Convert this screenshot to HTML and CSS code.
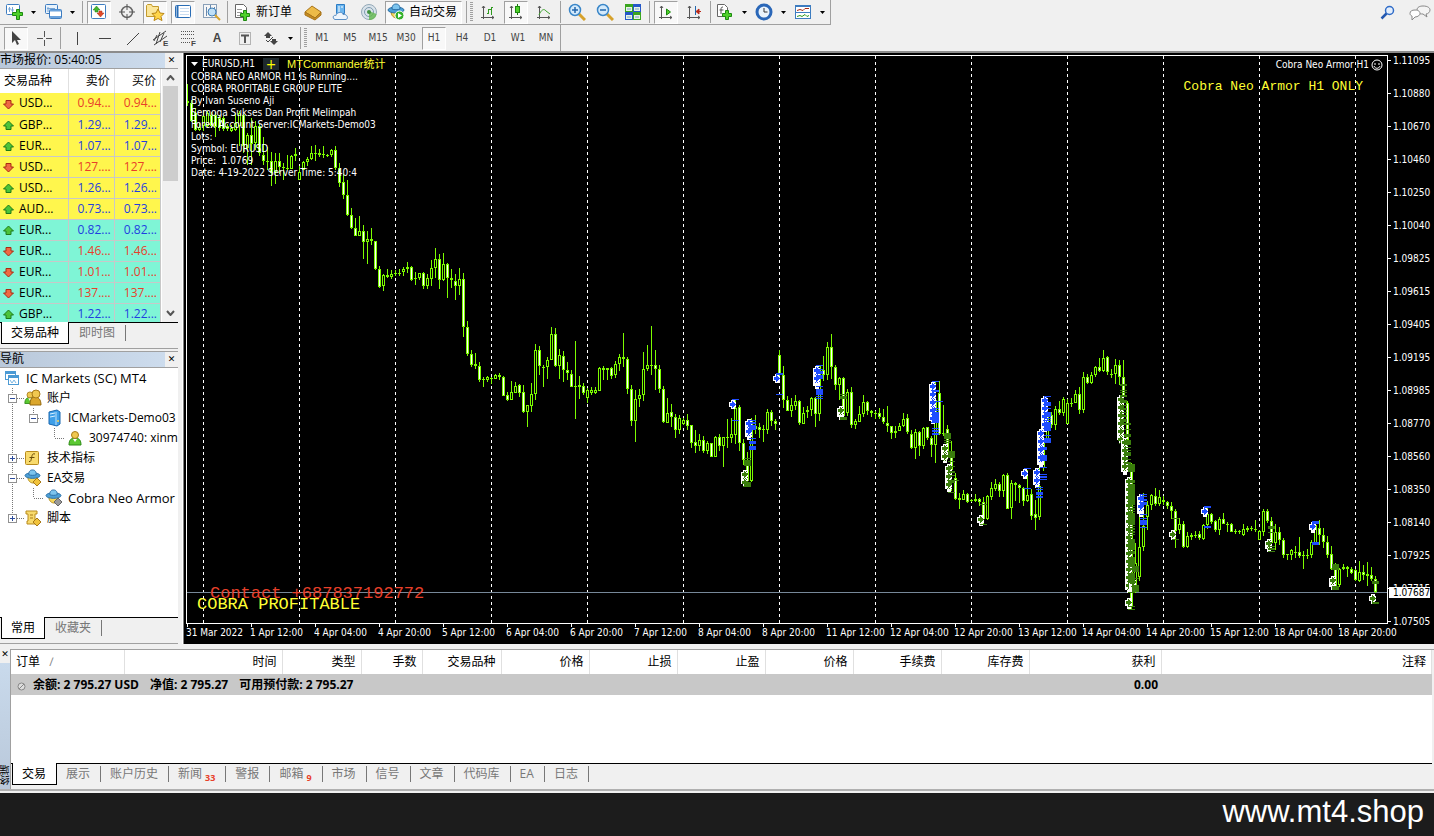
FILE: index.html
```html
<!DOCTYPE html>
<html lang="zh-CN">
<head>
    <meta charset="UTF-8">
    <meta name="viewport" content="width=device-width, initial-scale=1.0">
    <title>EURUSD,H1</title>
    <link rel="stylesheet" href="styles.css">
</head>
<body>

    <!-- Shared symbols -->
    <svg class="defs" width="0" height="0" aria-hidden="true">
        <symbol id="caret" viewBox="0 0 5 3"><path d="M0 0h5L2.500 3z" fill="#000"/></symbol>
        <symbol id="axes" viewBox="0 0 16 16"><path d="M3.500 15V2M1 13.500h13M2 4l1.500-2L5 4M12 12l2 1.500-2 1.500" fill="none" stroke="#555"/></symbol>
        <symbol id="up" viewBox="0 0 11 11"><path d="M5.500 1l5 5H8v3.500H3V6H.5z" fill="#4cc33a" stroke="#1e7a18"/></symbol>
        <symbol id="down" viewBox="0 0 11 11"><path d="M5.500 10l5-5H8V1.500H3V5H.5z" fill="#ef6a43" stroke="#a82a14"/></symbol>
        <symbol id="hat" viewBox="0 0 18 16">
            <path d="M4 8c0 5 3 7 6 7s4-3 4-7z" fill="#f6d65a" stroke="#b08a20"/>
            <ellipse cx="9" cy="7" rx="8" ry="3" fill="#4c9fd6" stroke="#2a6ea5"/>
            <path d="M5 6c0-4 2-5 4-5s4 1 4 5c-2 1-6 1-8 0z" fill="#7cc4ee" stroke="#2a6ea5"/>
        </symbol>
        <symbol id="man" viewBox="0 0 14 16">
            <path d="M1 15c0-5 2-7 6-7s6 2 6 7z" fill="#5bc832" stroke="#2c8a14"/>
            <path d="M5 9l2 3 2-3z" fill="#fff"/>
            <circle cx="7" cy="5" r="3.500" fill="#f0c850" stroke="#a87a18"/>
        </symbol>
        <!-- Tree branches -->
        <symbol id="pass" viewBox="0 0 24 20"><path d="M12.500 0v20" stroke="#777" stroke-dasharray="1 1"/></symbol>
        <symbol id="minus1" viewBox="0 0 24 20"><path d="M12.500 0v20M17 10.500h7" stroke="#777" stroke-dasharray="1 1"/><rect x="8.500" y="6.500" width="8" height="8" fill="#fff" stroke="#919191"/><path d="M10 10.500h5" stroke="#2b4b9b"/></symbol>
        <symbol id="plus1" viewBox="0 0 24 20"><path d="M12.500 0v20M17 10.500h7" stroke="#777" stroke-dasharray="1 1"/><rect x="8.500" y="6.500" width="8" height="8" fill="#fff" stroke="#919191"/><path d="M10 10.500h5M12.500 8v5" stroke="#2b4b9b"/></symbol>
        <symbol id="last1" viewBox="0 0 24 20"><path d="M12.500 0v10M17 10.500h7" stroke="#777" stroke-dasharray="1 1"/><rect x="8.500" y="6.500" width="8" height="8" fill="#fff" stroke="#919191"/><path d="M10 10.500h5M12.500 8v5" stroke="#2b4b9b"/></symbol>
        <symbol id="minus2" viewBox="0 0 21 20"><path d="M9.500 0v10M14 10.500h6" stroke="#777" stroke-dasharray="1 1"/><rect x="5.500" y="6.500" width="8" height="8" fill="#fff" stroke="#919191"/><path d="M7 10.500h5" stroke="#2b4b9b"/></symbol>
        <symbol id="elbow" viewBox="0 0 21 20"><path d="M9.500 0v10M10 10.500h10" stroke="#777" stroke-dasharray="1 1"/></symbol>
    </svg>

    <!-- Standard toolbar -->
    <header class="toolbars">
        <div class="bar-row">
            <div class="toolbar">
                <button class="tool drop" aria-label="新图表"><svg width="19" height="18"><rect x="1.500" y="1.500" width="13" height="10" rx="1" fill="#fff" stroke="#3d7cc0"/><path d="M4.500 4v5M7.500 4v5M3 6h3M6 7h3" stroke="#79a6d6"/><path d="M11.500 6.500h3v3h3v3h-3v4h-3v-4h-4v-3h4z" fill="#4fd02a" stroke="#1c8a10"/></svg><svg class="caret" width="5" height="3"><use href="#caret"/></svg></button>
                <button class="tool drop" aria-label="配置文件"><svg width="19" height="18"><rect x="1.500" y="1.500" width="12" height="9" rx="1" fill="#e9f3fc" stroke="#3d7cc0"/><rect x="5.500" y="6.500" width="12" height="9" rx="1" fill="#fff" stroke="#3d7cc0"/><path d="M6 7.500h11M6 14h11" stroke="#6aa2dc" stroke-width="2"/><path d="M4 4v5M3 5.500h8" stroke="#79a6d6"/></svg><svg class="caret" width="5" height="3"><use href="#caret"/></svg></button>
                <span class="sep"></span>
                <button class="tool on" aria-label="市场报价"><svg width="18" height="18"><rect x="1.500" y="1.500" width="14" height="14" rx="1" fill="#fff" stroke="#3d7cc0"/><path d="M6.500 3l3.500 4H8v2H5V7H3z" fill="#44b62d" stroke="#1e7a18" stroke-width=".5"/><path d="M10.500 14l3.500-4h-2V8H9v2H7z" fill="#e04a2a" stroke="#a82a14" stroke-width=".5"/></svg></button>
                <button class="tool" aria-label="数据窗口"><svg width="18" height="18"><circle cx="9" cy="9" r="5.500" fill="none" stroke="#666" stroke-width="1.500"/><path d="M9 1v6M9 11v6M1 9h6M11 9h6" stroke="#555"/></svg></button>
                <button class="tool on" aria-label="导航"><svg width="20" height="18"><path d="M1.500 13.500v-11l1-1h4l1 2h6v10z" fill="#fbe69a" stroke="#c39a2c"/><path d="M13 6l2 4 4 .5-3 3 1 4-4-2-4 2 1-4-3-3 4-.5z" fill="#ffd54a" stroke="#b98512"/></svg></button>
                <button class="tool on" aria-label="终端"><svg width="18" height="18"><rect x="1.500" y="2.500" width="15" height="12" rx="1" fill="#fff" stroke="#2a6db5"/><path d="M3.500 3v11" stroke="#2a6db5" stroke-width="2"/><path d="M6 5.500h9M6 8.500h9M6 11.500h9" stroke="#c9dcf0"/></svg></button>
                <button class="tool" aria-label="策略测试"><svg width="19" height="18"><rect x="1.500" y="1.500" width="13" height="13" fill="#f7f7f7" stroke="#8aa0b8"/><path d="M4.500 4v9M8.500 2v9M12.500 4v9" stroke="#6a89ad"/><circle cx="10" cy="9" r="4" fill="#bfe0f7" stroke="#3f7fb8"/><path d="M13 12l5 5" stroke="#d9a52c" stroke-width="2"/></svg></button>
                <span class="sep"></span>
                <button class="tool wide" aria-label="新订单"><svg width="18" height="18"><path d="M1.500 1.500h8l3 3v10h-11z" fill="#fff" stroke="#666"/><path d="M3 6.500h5M3 9.500h5M3 12.500h4" stroke="#999"/><path d="M9.500 7.500h3v3h3v3h-3v4h-3v-4h-3v-3h3z" fill="#4fd02a" stroke="#1c8a10"/></svg>新订单</button>
                <button class="tool" aria-label="MetaEditor"><svg width="18" height="18"><path d="M1 9l7-6 9 6-6 6z" fill="#edbb48" stroke="#a8741a"/><path d="M1 9v3l10 5 6-5V9l-6 6z" fill="#c68c22" stroke="#a8741a"/></svg></button>
                <button class="tool" aria-label="MQL5"><svg width="18" height="18"><path d="M4.500 1.500h8v9h-8z" fill="#6bb5ee" stroke="#2d7cc4"/><path d="M7 3v6M9 4h2" stroke="#fff"/><path d="M3 16.500c-3-1-2-5 1-4 1-4 7-4 7-1 4-1 6 4 3 5z" fill="#eef5fc" stroke="#5b8fc5"/></svg></button>
                <button class="tool" aria-label="信号"><svg width="18" height="18"><circle cx="9" cy="9" r="7.500" fill="#d9e3ea" stroke="#93a8b7"/><circle cx="9" cy="9" r="4.500" fill="none" stroke="#7f9bb0"/><path d="M9 8v9c4 0 7-2 7.500-6" fill="#62b84c" opacity=".8"/><circle cx="9" cy="9" r="2" fill="#3f9140"/></svg></button>
                <button class="tool wide on" aria-label="自动交易"><svg width="18" height="18"><use href="#hat" width="18" height="16"/><circle cx="12.500" cy="12.500" r="4.500" fill="#34b02a" stroke="#fff"/><path d="M11 10v5l4-2.500z" fill="#fff"/></svg>自动交易</button>
                <span class="sep"></span>
                <span class="grip"></span>
                <button class="tool" aria-label="柱状图"><svg width="16" height="16"><use href="#axes"/><path d="M8.500 10V5M11.500 11V3M7 9.500h2M9 5.500h2M11 3.500h2" stroke="#2f9a1f"/></svg></button>
                <button class="tool on" aria-label="阴阳烛"><svg width="16" height="16"><use href="#axes"/><path d="M9.500 0v11" stroke="#1c7a10"/><rect x="7.500" y="2.500" width="4" height="6" fill="#4fd02a" stroke="#1c8a10"/></svg></button>
                <button class="tool" aria-label="折线图"><svg width="16" height="16"><use href="#axes"/><path d="M3 11c2-5 5-7 7-4l4 3" fill="none" stroke="#3fa32f"/></svg></button>
                <span class="sep"></span>
                <button class="tool" aria-label="放大"><svg width="18" height="18"><path d="M11 11l6 6" stroke="#d6a12b" stroke-width="3"/><circle cx="7" cy="7" r="5.500" fill="#d4eafb" stroke="#3a86c8" stroke-width="1.500"/><path d="M4 7h6M7 4v6" stroke="#2367ad" stroke-width="1.500"/></svg></button>
                <button class="tool" aria-label="缩小"><svg width="18" height="18"><path d="M11 11l6 6" stroke="#d6a12b" stroke-width="3"/><circle cx="7" cy="7" r="5.500" fill="#d4eafb" stroke="#3a86c8" stroke-width="1.500"/><path d="M4 7h6" stroke="#2367ad" stroke-width="1.500"/></svg></button>
                <button class="tool" aria-label="平铺窗口"><svg width="18" height="18"><path d="M1 1h8v8H1zM9 9h8v8H9z" fill="#3aa51f"/><path d="M9 1h8v8H9zM1 9h8v8H1z" fill="#2558c8"/><path d="M2 4h6v4H2zM10 4h6v4h-6zM2 12h6v4H2zM10 12h6v4h-6z" fill="#e9f4e4"/><path d="M3 6h4M11 6h4M3 14h4M11 14h4" stroke="#78a0c8"/></svg></button>
                <span class="sep"></span>
                <button class="tool on" aria-label="自动滚动"><svg width="16" height="16"><use href="#axes"/><path d="M8.500 5v6l4-3z" fill="#4fd02a" stroke="#1c8a10"/></svg></button>
                <button class="tool" aria-label="图表平移"><svg width="16" height="16"><use href="#axes"/><path d="M9.500 2v9" stroke="#2367ad"/><path d="M15 7.500h-3M13 5l-3 2.500 3 2.500z" fill="#b92a1a" stroke="#b92a1a"/></svg></button>
                <span class="sep"></span>
                <button class="tool drop" aria-label="指标"><svg width="18" height="18"><path d="M1.500 1.500h7l3 3v9h-10z" fill="#fff" stroke="#666"/><path d="M7 4c-2 0-2 1-2 3v4M3.500 7h4" stroke="#555" fill="none"/><path d="M9.500 7.500h3v3h3v3h-3v3h-3v-3h-3v-3h3z" fill="#4fd02a" stroke="#1c8a10"/></svg><svg class="caret" width="5" height="3"><use href="#caret"/></svg></button>
                <button class="tool drop" aria-label="周期"><svg width="18" height="18"><circle cx="9" cy="9" r="7" fill="#eaf3fc" stroke="#2a67b8" stroke-width="3"/><path d="M9 5v4h3.500" stroke="#333" fill="none"/></svg><svg class="caret" width="5" height="3"><use href="#caret"/></svg></button>
                <button class="tool drop" aria-label="模板"><svg width="18" height="18"><rect x="1.500" y="2.500" width="15" height="13" fill="#fff" stroke="#3d7cc0"/><path d="M2 3.500h14M2 9.500h14" stroke="#3d7cc0"/><path d="M3 7.500l3-1 3 1 2-2h4" stroke="#a82a14" fill="none"/><path d="M3 13.500l3-1 2 1 3-2 2 2 2-1" stroke="#2f9a1f" fill="none"/></svg><svg class="caret" width="5" height="3"><use href="#caret"/></svg></button>
            </div>
            <div class="right-tools">
                <button class="tool" aria-label="搜索"><svg width="16" height="16"><circle cx="9.500" cy="5.500" r="4" fill="#e4eefb" stroke="#2f6cc8" stroke-width="1.500"/><path d="M6.500 8.500L1.500 13.500" stroke="#2458b0" stroke-width="2.500"/></svg></button>
                <button class="tool" aria-label="聊天"><svg width="22" height="18"><path d="M14 2c5 0 7 2 7 4s-2 4-4 4l1 3-4-3c-4 0-6-1-6-4s3-4 6-4z" fill="#f4f4f4" stroke="#888"/><path d="M6 6c4 0 5 2 5 3.500S9 13 6 13l-3 3v-4c-1-.5-2-1-2-2.500C1 7 3 6 6 6z" fill="#fff" stroke="#888"/></svg></button>
            </div>
        </div>

        <!-- Line studies and timeframes -->
        <div class="bar-row">
            <div class="toolbar">
                <button class="tool on" aria-label="光标"><svg width="18" height="18"><path d="M5 2v12l3-3 2 5 2-1-2-4h4z" fill="#444"/></svg></button>
                <button class="tool" aria-label="十字线"><svg width="18" height="18"><path d="M9.500 2v6M9.500 11v6M2 9.500h6M11 9.500h6" stroke="#555"/></svg></button>
                <span class="sep"></span>
                <button class="tool" aria-label="垂直线"><svg width="18" height="18"><path d="M9.500 3v13" stroke="#444"/></svg></button>
                <button class="tool" aria-label="水平线"><svg width="18" height="18"><path d="M3 9.500h12" stroke="#444"/></svg></button>
                <button class="tool" aria-label="趋势线"><svg width="18" height="18"><path d="M3 16L15 4" stroke="#444"/></svg></button>
                <button class="tool" aria-label="等距通道"><svg width="18" height="18"><path d="M1 11L14 2M2 16L15 7M4 15L8 3M8 13l4-9M2 12l3-6" stroke="#444"/><text x="11" y="17" class="mini">E</text></svg></button>
                <button class="tool" aria-label="斐波纳契"><svg width="18" height="18"><path d="M1 2.500h14M1 5.500h14M1 9.500h14M1 13.500h9" stroke="#555" stroke-dasharray="1 1"/><text x="11" y="17" class="mini">F</text></svg></button>
                <button class="tool letter" aria-label="文字">A</button>
                <button class="tool" aria-label="文字标签"><svg width="18" height="18"><rect x="3.500" y="3.500" width="11" height="12" fill="none" stroke="#777" stroke-dasharray="1 1"/><path d="M5 6.500h8M9 6v8" stroke="#555" stroke-width="2"/></svg></button>
                <button class="tool drop" aria-label="箭头"><svg width="18" height="18"><path d="M6 3l4 4H8v2H4V7H2zM12 16l4-4h-2v-2h-4v2H8z" fill="#444"/><path d="M4 11l2 2 5-5" stroke="#444" fill="none"/></svg><svg class="caret" width="5" height="3"><use href="#caret"/></svg></button>
                <span class="sep"></span>
                <span class="grip"></span>
                <button class="tool tf">M1</button>
                <button class="tool tf">M5</button>
                <button class="tool tf">M15</button>
                <button class="tool tf">M30</button>
                <button class="tool tf on">H1</button>
                <button class="tool tf">H4</button>
                <button class="tool tf">D1</button>
                <button class="tool tf">W1</button>
                <button class="tool tf">MN</button>
            </div>
        </div>
    </header>

    <main class="workspace">
        <aside class="sidebar">
            <!-- Market watch -->
            <section class="panel">
                <div class="panel-title"><h2>市场报价: 05:40:05</h2><button class="close" aria-label="关闭">✕</button></div>
                <div class="quotes">
                    <table class="quote-table">
                        <thead><tr><th>交易品种</th><th>卖价</th><th>买价</th></tr></thead>
                        <tbody id="quoteRows"></tbody>
                    </table>
                    <div class="scroll">
                        <svg width="9" height="6"><path d="M1 5l3.500-4L8 5" fill="none" stroke="#555" stroke-width="2"/></svg>
                        <span class="thumb"></span>
                        <svg width="9" height="6"><path d="M1 1l3.500 4L8 1" fill="none" stroke="#555" stroke-width="2"/></svg>
                    </div>
                </div>
                <nav class="tabs"><button class="tab active">交易品种</button><button class="tab">即时图</button></nav>
            </section>

            <!-- Navigator -->
            <section class="panel navigator">
                <div class="panel-title"><h2>导航</h2><button class="close" aria-label="关闭">✕</button></div>
                <ul class="tree">
                    <li class="root latin"><svg width="16" height="16"><rect x="1.500" y="1.500" width="10" height="8" fill="#fff" stroke="#4c9ad4"/><path d="M1 3h11" stroke="#4c9ad4" stroke-width="2"/><rect x="4.500" y="5.500" width="10" height="9" fill="#fff" stroke="#4c9ad4"/><path d="M4 7h11" stroke="#4c9ad4" stroke-width="2"/><path d="M6 10l2 3 2-3 2 3" fill="none" stroke="#7ab7e4"/></svg>IC Markets (SC) MT4</li>
                    <li><svg width="24" height="20"><use href="#minus1"/></svg><svg class="node" width="18" height="18"><use href="#man" x="0" y="1" width="12" height="15"/><path d="M6 16c0-6 2-8 5-8s6 2 6 8z" fill="#dba62c" stroke="#94690e"/><circle cx="12" cy="5" r="4" fill="#f0c850" stroke="#a87a18"/></svg>账户</li>
                    <li><svg width="24" height="20"><use href="#pass"/></svg><svg width="21" height="20"><use href="#minus2"/></svg><svg class="node" width="18" height="18"><path d="M4 3l8-2 3 2v12l-3 2-8-2z" fill="#3f9fe8" stroke="#1b68b0"/><path d="M11 3v13" stroke="#bfe0fa"/><path d="M5 5l5-1M5 8l5-1" stroke="#d9efff"/><circle cx="13" cy="12" r="1" fill="#ffd54a"/></svg>ICMarkets-Demo03</li>
                    <li><svg width="24" height="20"><use href="#pass"/></svg><span class="blank"></span><svg width="21" height="20"><use href="#elbow"/></svg><svg class="node" width="18" height="18"><use href="#man" x="2" y="1" width="14" height="16"/></svg>30974740: xinm</li>
                    <li><svg width="24" height="20"><use href="#plus1"/></svg><svg class="node" width="18" height="18"><rect x="1.500" y="2.500" width="13" height="13" rx="1" fill="#f8da6c" stroke="#b98b1c"/><path d="M11 5c-3-1-3 2-3.500 4S7 13 5 12.500M5.500 8.500h5" fill="none" stroke="#6b4c08"/></svg>技术指标</li>
                    <li><svg width="24" height="20"><use href="#minus1"/></svg><svg class="node" width="18" height="18"><use href="#hat" width="17" height="15"/><path d="M13 9l4 4-4 4-4-4z" fill="#f1c33c" stroke="#a87a18"/></svg>EA交易</li>
                    <li class="latin"><svg width="24" height="20"><use href="#pass"/></svg><svg width="21" height="20"><use href="#elbow"/></svg><svg class="node" width="18" height="18"><use href="#hat" width="17" height="15"/><path d="M13 9l4 4-4 4-4-4z" fill="#999" stroke="#666"/></svg>Cobra Neo Armor</li>
                    <li><svg width="24" height="20"><use href="#last1"/></svg><svg class="node" width="18" height="18"><path d="M2 2h11v3h-2v7h2v3H3v-3h1V5H2z" fill="#f8da6c" stroke="#b98b1c"/><path d="M6 6h3M6 9h3" stroke="#a87a18"/><path d="M13 9l4 4-4 4-4-4z" fill="#f1c33c" stroke="#a87a18"/></svg>脚本</li>
                </ul>
                <nav class="tabs"><button class="tab active">常用</button><button class="tab">收藏夹</button></nav>
            </section>
        </aside>

        <!-- Chart -->
        <section class="chart">
            <div class="plot">
                <svg class="candles" id="candles" shape-rendering="crispEdges"></svg>
                <div class="overlay info">
                    <div class="symbol-line"><svg width="7" height="4"><path d="M0 0h7L3.500 4z" fill="#fff"/></svg><span>EURUSD,H1</span><button class="expand">+</button><span class="commander">MTCommander统计</span></div>
                    <p>COBRA NEO ARMOR H1 Is Running....<br>
                    COBRA PROFITABLE GROUP ELITE<br>
                    By Ivan Suseno Aji<br>
                    Semoga Sukses Dan Profit Melimpah<br>
                    Forex Account Server:ICMarkets-Demo03<br>
                    Lots:<br>
                    Symbol: EURUSD<br>
                    Price:&nbsp; 1.0769<br>
                    Date: 4-19-2022 Server Time: 5:40:4</p>
                </div>
                <div class="overlay expert">
                    <span class="expert-name">Cobra Neo Armor H1 <svg width="12" height="12"><circle cx="6" cy="6" r="5" fill="none" stroke="#fff"/><path d="M4 4v2M8 4v2M3 7c1 3 5 3 6 0" fill="none" stroke="#fff"/></svg></span>
                    <span class="only">Cobra Neo Armor H1 ONLY</span>
                </div>
                <div class="overlay contact"><span class="phone">Contact +687837192772</span><span class="brand">COBRA PROFITABLE</span></div>
            </div>
            <div class="prices" id="prices"><span class="bid">1.07687</span></div>
            <div class="dates" id="dates"></div>
        </section>
    </main>

    <!-- Terminal -->
    <section class="terminal">
        <div class="terminal-side"><button class="close" aria-label="关闭">✕</button><span class="side-label">终端</span></div>
        <div class="terminal-main">
            <div class="orders">
                <table class="order-table">
                    <colgroup><col class="c-order"><col class="c-time"><col class="c-type"><col class="c-lots"><col class="c-type"><col class="c-price"><col class="c-price"><col class="c-price"><col class="c-price"><col class="c-price"><col class="c-price"><col class="c-profit"><col></colgroup>
                    <thead>
                        <tr><th>订单 <span class="sort">∕</span></th><th>时间</th><th>类型</th><th>手数</th><th>交易品种</th><th>价格</th><th>止损</th><th>止盈</th><th>价格</th><th>手续费</th><th>库存费</th><th>获利</th><th>注释</th></tr>
                    </thead>
                    <tbody>
                        <tr><td colspan="11"><svg width="9" height="9"><circle cx="4.500" cy="4.500" r="3.500" fill="#ddd" stroke="#888"/><path d="M2 7l5-5" stroke="#888"/></svg><span>余额: 2 795.27 USD</span><span>净值: 2 795.27</span><span>可用预付款: 2 795.27</span></td><td>0.00</td><td></td></tr>
                    </tbody>
                </table>
            </div>
            <nav class="tabs">
                <button class="tab active">交易</button>
                <button class="tab">展示</button>
                <button class="tab">账户历史</button>
                <button class="tab">新闻<sub>33</sub></button>
                <button class="tab">警报</button>
                <button class="tab">邮箱<sub>9</sub></button>
                <button class="tab">市场</button>
                <button class="tab">信号</button>
                <button class="tab">文章</button>
                <button class="tab">代码库</button>
                <button class="tab">EA</button>
                <button class="tab">日志</button>
            </nav>
        </div>
    </section>

    <footer class="footer"><a href="#">www.mt4.shop</a></footer>

    <script src="chart.js"></script>
</body>
</html>
```
FILE: styles.css
```css
* {
    box-sizing: border-box;
}

body {
    margin: 0;
    height: 100vh;
    display: flex;
    flex-direction: column;
    overflow: hidden;
    background-color: #f0f0f0;
    color: #000;
    font-family: "Open Sans", "Noto Sans CJK SC", sans-serif;
    font-size: 12px;
    line-height: 16px;
}

button {
    margin: 0;
    padding: 0;
    border: 0;
    background: none;
    font: inherit;
    color: inherit;
}

svg {
    flex: none;
}

h2,
p,
ul {
    margin: 0;
    padding: 0;
    font-size: 12px;
    font-weight: normal;
}

.defs {
    position: absolute;
}

/* Toolbars */
.toolbars {
    border-bottom: 2px solid #8c8c8c;
}

.bar-row {
    display: flex;
    justify-content: space-between;
    height: 25px;
}

.bar-row + .bar-row {
    height: 26px;
}

.toolbar {
    display: flex;
    align-items: center;
    padding-left: 2px;
    border-right: 1px solid #a0a0a0;
    border-bottom: 1px solid #a0a0a0;
}

.bar-row + .bar-row .toolbar {
    border-bottom: 0;
}

.tool {
    display: flex;
    align-items: center;
    justify-content: center;
    width: 24px;
    height: 23px;
    margin: 0 2px;
    border: 1px solid transparent;
}

.tool.drop {
    width: 35px;
    justify-content: space-between;
    padding-right: 2px;
}

.tool.wide {
    width: auto;
    gap: 4px;
    padding: 0 4px 0 1px;
    white-space: nowrap;
}

.tool.on {
    border-color: #a0a0a0 #fff #fff #a0a0a0;
    background-color: #f8f8f8;
}

.tf,
.letter {
    color: #444;
    font-family: "DejaVu Sans Condensed", "DejaVu Sans", sans-serif;
    font-size: 10px;
}

.letter {
    font-family: "Liberation Sans", sans-serif;
    font-size: 12px;
    font-weight: bold;
}

.mini {
    font-family: "Liberation Sans", sans-serif;
    font-size: 8px;
    font-weight: bold;
    fill: #444;
}

.sep {
    width: 1px;
    height: 22px;
    margin: 0 2px;
    background-color: #a0a0a0;
}

.grip {
    width: 3px;
    height: 20px;
    margin: 0 1px;
    background: repeating-linear-gradient(#a0a0a0 0 1px, #f0f0f0 1px 2px);
}

.right-tools {
    display: flex;
    align-items: center;
    gap: 4px;
}

/* Sidebar */
.workspace {
    flex: 1;
    min-height: 0;
    display: flex;
}

.sidebar {
    width: 183px;
    display: flex;
    flex-direction: column;
    gap: 2px;
    padding-right: 4px;
    border-right: 1px solid #fff;
}

.panel {
    display: flex;
    flex-direction: column;
    border-bottom: 1px solid #a0a0a0;
    padding-bottom: 3px;
}

.navigator {
    flex: 1;
    min-height: 0;
    border-top: 1px solid #a0a0a0;
}

.panel-title {
    display: flex;
    height: 16px;
    border-bottom: 1px solid #a0a0a0;
}

.panel-title h2 {
    flex: 1;
    line-height: 14px;
    background: linear-gradient(90deg, #b9c8da, #cddced);
}

.close {
    width: 13px;
    font-family: "DejaVu Sans", sans-serif;
    font-size: 9px;
    font-weight: bold;
    line-height: 15px;
}

.quotes {
    display: flex;
    align-items: flex-start;
    height: 253px;
    overflow: hidden;
    background-color: #fff;
}

.quote-table {
    width: 161px;
    table-layout: fixed;
    border-collapse: collapse;
}

.quote-table th {
    height: 24px;
    padding: 0 4px;
    border-right: 1px solid #e0e0e0;
    font-weight: normal;
    text-align: right;
}

.quote-table th:first-child {
    width: 68px;
    text-align: left;
}

.quote-table td {
    height: 21px;
    padding: 0 3px;
    border-right: 1px solid #c8c8c8;
    border-bottom: 1px solid #c8c8c8;
    text-align: right;
}

.quote-table td:first-child {
    text-align: left;
}

.quote-table td svg {
    margin-right: 5px;
    vertical-align: middle;
}

.major td {
    background-color: #fff64d;
}

.cross td {
    background-color: #7ff5d6;
}

.rise td + td {
    color: #1f3fe0;
}

.fall td + td {
    color: #e8402a;
}

.scroll {
    flex: 1;
    height: 253px;
    display: flex;
    flex-direction: column;
    align-items: center;
    margin-left: 1px;
    padding: 6px 0;
    background-color: #f0f0f0;
}

.thumb {
    width: 15px;
    height: 95px;
    margin: 5px 0 auto;
    background-color: #cdcdcd;
}

.tabs {
    display: flex;
    height: 23px;
    background: linear-gradient(#000 0 1px, transparent 1px);
}

.tab {
    display: flex;
    align-items: center;
    margin-top: 3px;
    height: 16px;
    padding: 0 10px;
    border-right: 1px solid #777;
    color: #777;
    white-space: nowrap;
}

.tab.active {
    height: 22px;
    margin: 0 0 0 1px;
    padding: 0 9px;
    border: solid #000;
    border-width: 0 1px 1px;
    background-color: #fff;
    color: #000;
}

.tree {
    flex: 1;
    min-height: 0;
    overflow: hidden;
    list-style: none;
    background-color: #fff;
}

.tree li {
    display: flex;
    align-items: center;
    height: 20px;
    white-space: nowrap;
}

.tree .root {
    gap: 6px;
    padding-left: 4px;
}

.tree .latin {
    font-size: 13px;
}

.node {
    margin-right: 5px;
}

.blank {
    flex: none;
    width: 21px;
}

/* Chart */
.chart {
    flex: 1;
    min-width: 0;
    display: grid;
    grid-template-columns: 1fr 46px;
    grid-template-rows: 1fr 20px;
    padding: 2px 0 0 2px;
    border-left: 1px solid #808080;
    background-color: #000;
    color: #fff;
    font-family: "DejaVu Sans Condensed", "DejaVu Sans", sans-serif;
    font-size: 10px;
    line-height: 12px;
}

.plot {
    position: relative;
    min-height: 0;
    overflow: hidden;
    border: 1px solid #fff;
}

.candles {
    display: block;
    width: 100%;
    height: 100%;
}

.overlay {
    position: absolute;
}

.info {
    top: 0;
    left: 4px;
}

.info p {
    font-size: 10px;
    white-space: nowrap;
}

.symbol-line {
    display: flex;
    align-items: center;
    gap: 4px;
    height: 15px;
}

.expand {
    width: 16px;
    height: 12px;
    margin: 0 4px;
    background-color: #1e282d;
    color: #ff0;
    font-size: 14px;
    line-height: 12px;
}

.commander {
    color: #ff3;
    font-family: "Liberation Sans", "Noto Sans CJK SC", sans-serif;
    font-size: 11px;
}

.expert {
    top: 3px;
    right: 4px;
    display: flex;
    flex-direction: column;
    align-items: flex-end;
    gap: 8px;
}

.expert-name {
    display: flex;
    align-items: center;
    gap: 2px;
}

.only {
    margin-right: 20px;
    color: #ff3;
    font-family: "Liberation Mono", monospace;
    font-size: 13px;
    line-height: 16px;
}

.contact {
    left: 10px;
    bottom: 13px;
    display: flex;
    flex-direction: column;
    font-family: "Liberation Mono", monospace;
    font-size: 17px;
    line-height: 11px;
}

.phone {
    padding-left: 13px;
    color: #e8402a;
}

.brand {
    color: #ff3;
}

.prices {
    position: relative;
    min-height: 0;
    display: flex;
    flex-direction: column;
    gap: 21px;
}

.prices span {
    flex: none;
}

.prices span::before {
    content: "";
    display: inline-block;
    width: 3px;
    height: 1px;
    margin-right: 2px;
    vertical-align: 3px;
    background-color: #fff;
}

.prices .bid {
    position: absolute;
    right: 4px;
    bottom: 26px;
    width: 41px;
    padding-left: 4px;
    background-color: #fff;
    color: #000;
    line-height: 11px;
}

.prices .bid::before {
    content: none;
}

.dates {
    grid-column: 1 / 3;
    display: flex;
    overflow: hidden;
}

.dates span {
    flex: none;
    width: 64px;
    white-space: nowrap;
}

.dates span::before {
    content: "";
    display: block;
    width: 1px;
    height: 3px;
    margin-left: 1px;
    background-color: #fff;
}

/* Terminal */
.terminal {
    display: flex;
    margin-top: 5px;
    border-bottom: 2px solid #b0b0b0;
}

.terminal-side {
    width: 10px;
    display: flex;
    flex-direction: column;
    justify-content: space-between;
    align-items: center;
    padding-bottom: 4px;
    background: linear-gradient(#f0f0f0 0 14px, #c9daec 14px, #b9c8da);
}

.terminal-side .close {
    width: 10px;
    line-height: 10px;
}

.side-label {
    writing-mode: vertical-rl;
    transform: rotate(180deg);
    font-size: 10px;
    line-height: 10px;
}

.terminal-main {
    flex: 1;
    min-width: 0;
    padding: 0 2px 3px 0;
    border-top: 1px solid #a0a0a0;
    border-left: 1px solid #a0a0a0;
}

.orders {
    height: 113px;
    background-color: #fff;
}

.order-table {
    width: 100%;
    table-layout: fixed;
    border-collapse: collapse;
}

.c-order {
    width: 113px;
}

.c-time {
    width: 158px;
}

.c-type {
    width: 79px;
}

.c-lots {
    width: 61px;
}

.c-price {
    width: 88px;
}

.c-profit {
    width: 132px;
}

.order-table th {
    height: 24px;
    padding: 0 5px;
    border-right: 1px solid #e0e0e0;
    font-weight: normal;
    text-align: right;
}

.order-table th:first-child {
    text-align: left;
}

.sort {
    margin-left: 6px;
    color: #888;
}

.order-table td {
    height: 21px;
    padding: 0 3px 0 6px;
    background-color: #c8c8c8;
    font-weight: bold;
    text-align: right;
}

.order-table td:first-child {
    text-align: left;
}

.order-table td span {
    margin-right: 11px;
}

.order-table td svg {
    margin-right: 7px;
    vertical-align: -2px;
}

.terminal .tabs .tab {
    padding: 0 10px 0 9px;
}

.tab sub {
    align-self: flex-end;
    margin-left: 3px;
    color: #e8402a;
    font-size: 9px;
    font-weight: bold;
    line-height: 9px;
}

/* Footer */
.footer {
    display: flex;
    justify-content: flex-end;
    align-items: center;
    height: 43px;
    margin-top: 2px;
    padding: 0 10px 6px 0;
    background-color: #1c1c1c;
}

.footer a {
    color: #fff;
    font-family: "Liberation Sans", sans-serif;
    font-size: 31px;
    line-height: 35px;
    text-decoration: none;
}
```
FILE: chart.js
```js
// Top-left corner of the plot inside the window
const LEFT = 187;
const TOP = 56;
const STEP = 4;

// Each bar is "high top bottom low direction", three points to a pixel
const sessions = [
    { top: 50, bars: `103 155 160 170 u,150 160 215 218 d,175 190 240 245 d,220 232 241 243 u,180 200 230 245 u,
        185 190 230 235 u,188 195 230 235 d,188 195 232 262 d,195 205 235 243 d,198 205 237 243 d,222 228 238 245 u,
        225 235 243 248 u,190 220 240 245 u,185 190 230 290 u,192 195 290 310 d,250 255 296 345 u,205 255 283 345 d,
        215 230 280 300 u,222 228 310 320 d,262 315 335 345 d,293 333 335 362 d,308 335 370 410 d,310 335 368 402 u,
        310 335 352 372 d,340 352 356 390 d,315 355 358 360 d,315 318 358 358 u,295 314 320 335 u,350 368 392 392 u,
        333 337 360 362 u,323 327 337 350 u,288 310 328 332 u,285 309 311 335 d,298 310 316 323 d,290 312 316 325 d,
        313 315 317 323 d,297 300 315 322 u,288 300 355 362 d,340 355 400 412 d,372 397 437 448 d,390 436 497 500 d,
        475 496 535 537 d,505 535 560 560 d,498 543 560 560 u,525 543 578 629 d,545 567 578 642 u,535 568 573 587 d,
        574 574 659 662 d,650 658 713 716 d,672 676 709 725 u,657 676 682 685 d,660 673 682 687 u,660 671 674 680 u,
        658 669 671 680 d,652 658 668 678 u,636 652 658 670 u,648 652 692 695 d,667 685 687 705 d,670 670 686 690 u,
        668 670 710 718 d,672 685 710 718 u,630 655 688 710 u,594 628 655 684 u,612 628 692 718 d,610 643 692 694 u,
        640 643 685 746 d,657 685 692 716 d,672 694 709 750 d,655 688 709 735 u,670 688 832 863 d` },
    { top: 300, bars: `64 82 164 170 d,150 162 195 203 d,159 192 200 209 d,186 198 242 248 d,233 237 242 261 u,
        228 231 242 248 u,233 235 238 252 d,222 225 237 239 u,219 225 233 240 d,228 231 288 288 d,276 285 302 305 d,
        243 276 300 302 u,246 258 279 281 u,252 255 279 293 d,255 276 338 339 d,315 316 338 383 u,249 282 318 338 u,
        132 150 284 302 u,138 150 200 227 d,195 202 203 263 d,171 180 203 239 u,81 102 182 182 u,84 102 200 203 d,
        147 165 198 237 u,153 168 212 248 d,186 210 221 240 d,210 222 261 263 d,123 258 263 359 u,228 255 263 299 u,
        249 258 279 287 d,264 270 296 309 u,261 270 281 287 u,261 270 279 284 u,201 204 273 275 u,198 204 212 242 d,
        204 206 212 240 u,201 204 228 237 d,183 192 227 234 u,162 171 194 215 u,99 171 179 203 d,171 177 267 284 d,
        255 267 365 378 d,270 297 365 426 u,267 285 297 323 u,156 207 287 305 u,135 195 209 215 u,78 195 200 227 d,
        150 195 207 270 d,195 207 267 281 d,258 267 368 371 d,294 339 369 371 u,312 336 353 383 d,342 351 392 414 d,
        345 354 392 402 u,354 360 372 375 u,342 360 380 392 d,375 376 429 446 d,390 426 440 459 d,402 420 440 455 u,
        408 420 455 461 d,423 430 455 464 u,429 430 473 473 d,408 411 473 473 u,402 411 440 455 d,411 412 440 503 u,
        357 411 416 446 d,354 402 416 429 u,300 324 407 434 u,315 321 431 455 d,417 430 482 495 d,456 480 545 548 d,
        354 360 543 548 u,345 380 388 402 u,369 382 391 414 d,375 388 392 426 d,327 336 390 404 u,330 336 363 378 d,
        357 363 372 392 d,150 165 225 239 d,198 225 302 326 d,288 300 335 335 d,294 315 335 353 u,285 303 318 330 u,
        300 303 371 377 d,321 339 374 374 u,318 330 338 356 u,291 294 332 350 u,291 294 344 383 d,198 200 344 365 u,
        168 212 227 245 d,126 141 227 242 u,102 141 203 239 d,195 201 257 272 d,231 234 257 300 u,231 234 350 355 d,
        267 276 340 350 u,261 276 377 386 d,357 363 377 389 u,318 342 366 368 u,285 306 344 353 u,303 306 335 347 d,
        330 333 339 353 d,333 339 341 357 d,324 339 353 357 d,327 351 368 372 d,318 369 380 398 d,378 380 401 419 d,
        378 393 401 416 u,369 378 395 395 u,339 357 380 381 u,342 354 398 403 d,390 402 446 449 d,387 396 446 479 u,
        393 396 440 470 d,381 384 440 449 u,381 382 416 422 d,408 414 437 473 d,245 300 437 491 u,243 280 402 407 d,
        315 399 402 410 d,375 387 460 480 d,423 455 510 575 d,519 534 597 600 d,579 594 600 629 d,570 582 600 602 u,
        581 582 608 611 d,597 600 603 606 d,582 599 603 608 d,594 597 608 620 d,591 606 659 677 d,585 588 657 662 u,
        546 564 591 600 u,537 552 567 575 u,546 552 575 593 d,522 525 573 591 u,519 525 629 629 d,540 549 626 659 u,
        546 549 555 603 d,553 555 566 611 d,561 564 605 620 d,510 585 605 608 u,567 582 648 660 d,600 642 654 690 d,
        500 560 651 662 u,420 430 506 515 u,330 340 420 430 u,336 345 377 386 d,318 327 377 392 u,303 327 341 347 d,
        291 297 341 350 u,297 309 372 374 u,294 309 311 323 d,270 282 309 311 u,261 282 332 342 d,216 231 332 341 u,
        222 231 251 254 d,216 225 251 252 u,198 201 227 233 u,174 201 213 216 d,150 174 213 216 u,168 171 218 227 d,
        207 222 224 234 d,177 195 224 254 u` },
    { top: 330, bars: `90 105 143 165 d,90 142 200 200 d,215 220 330 335 d,400 425 830 838 d,640 700 780 790 u,
        540 652 742 754 u,490 590 652 665 u,515 527 562 600 u,492 495 527 540 u,474 498 524 530 d,480 501 522 530 u,
        498 510 517 525 d,513 516 530 537 d,516 528 545 567 d,537 543 603 654 d,566 582 601 612 u,573 582 653 656 d,
        606 620 653 656 u,609 616 622 630 u,603 615 617 624 u,603 612 626 630 d,582 585 628 630 u,535 552 585 597 u,
        549 552 576 584 d,570 573 602 608 d,561 567 602 615 u,549 567 582 584 d,576 582 585 608 d,580 582 606 608 d,
        597 603 608 612 d,600 605 607 614 d,582 597 616 618 u,588 594 600 608 u,588 596 598 605 d,570 597 599 608 d,
        600 603 632 632 u,537 543 608 620 u,537 543 573 581 d,563 573 640 645 d,582 606 640 660 u,591 606 632 645 d,
        624 630 675 684 d,672 673 676 690 d,657 660 676 692 u,648 667 670 684 d,621 668 680 686 d,663 677 680 719 d,
        657 675 677 688 u,630 636 675 686 u,575 585 640 640 u,570 594 616 645 d,594 615 638 656 d,618 636 675 684 d,
        648 672 717 720 d,700 715 770 780 d,714 717 767 773 u,702 711 717 720 u,708 711 718 743 d,712 717 731 734 d,
        718 720 752 754 d,693 726 755 757 u,705 726 735 752 d,696 732 740 768 d,711 737 749 755 d,740 747 787 790 d` }
];

// Entry arrows: x, first y, last y, colour
const BLUE = '#1f4dff';
const GREEN = '#3a7d0c';
const entries = [
    [729, 400, 408, BLUE], [745, 419, 439, BLUE], [741, 470, 486, GREEN], [773, 374, 382, BLUE],
    [813, 366, 388, BLUE], [837, 406, 419, GREEN], [929, 382, 423, BLUE], [941, 444, 462, GREEN],
    [945, 464, 491, GREEN], [977, 515, 525, GREEN], [1021, 469, 478, BLUE], [1033, 468, 487, BLUE],
    [1037, 429, 467, BLUE], [1041, 396, 431, BLUE], [1117, 395, 442, GREEN], [1121, 438, 474, GREEN],
    [1125, 477, 592, GREEN], [1129, 578, 592, GREEN], [1125, 598, 608, GREEN], [1137, 494, 516, BLUE],
    [1169, 530, 539, GREEN], [1201, 507, 516, BLUE], [1265, 539, 551, GREEN], [1309, 522, 532, BLUE],
    [1329, 576, 589, GREEN], [1369, 594, 603, GREEN]
];

// Stop and target levels: x, colour, then "y" or "y-y" ranges
const levels = [
    [732, BLUE, '399 420'], [749, BLUE, '420 422-423 425-429 438 441-443 446-449'],
    [744, GREEN, '458 460-465 482-486'], [776, BLUE, '373-374 394'],
    [816, BLUE, '365 369 371-373 375-378 386 389-394 396 398'], [840, GREEN, '394 396-398 417-419'],
    [932, BLUE, '381 390-391 408 410 412-422 428 430-431 433-434'], [936, BLUE, '401'],
    [944, GREEN, '433-438 440 442'], [948, GREEN, '451-457 461 466 471-472 475 480-482 492'],
    [952, GREEN, '480'], [980, GREEN, '504 524'], [1024, BLUE, '468 488'],
    [1036, BLUE, '487 489 492-494 496-497'], [1040, BLUE, '447-449 455-460 467 474 476-477 479'],
    [1044, BLUE, '396 402-405 408 412-416 418 420 422-430 435 438-442'],
    [1120, GREEN, '384-385 390 392 395-396 400-402 405 408-409 412 415-416 419-421 424'],
    [1124, GREEN, '423-424 429 434-436 440-444 447 450 452-455 459 462-463'],
    [1128, GREEN, '464-471 480-482 484-504 506 508-509 511 513-524 526 528-529 531-532 534 539-549 551-553 557-566 569 573-582 592 606 609'],
    [1132, GREEN, '566-571 578 585-591'], [1140, BLUE, '494 496 499-500 502-504 514 518 520-524 527'],
    [1172, GREEN, '518 539'], [1204, BLUE, '506-507 526-527'], [1268, GREEN, '526-528 532 546 548-549 551'],
    [1312, BLUE, '521-523 542-544'], [1332, GREEN, '564-569 586-589'], [1372, GREEN, '581-583 602-603']
];

const rect = (x, y, w, h, fill) => `<rect x="${x - LEFT}" y="${y - TOP}" width="${w}" height="${h}" fill="${fill}"/>`;

function drawSeparators() {
    let out = '';
    for (let x = 203; x < 1387; x += 96) {
        out += `<path d="M${x - LEFT + 0.5} 0V567" stroke="#fff" stroke-dasharray="3 3"/>`;
    }
    return out;
}

function drawBars() {
    let out = '';
    let x = LEFT;
    sessions.forEach(session => {
        session.bars.split(',').forEach(bar => {
            const parts = bar.trim().split(' ');
            const [high, top, bottom, low] = parts.slice(0, 4).map(v => session.top + Math.floor(v / 3));
            const height = Math.max(bottom - top, 1);
            out += rect(x, high, 1, Math.max(low - high, 1), '#7cfc00');
            out += rect(x - 1, top, 3, height, '#7cfc00');
            if (height > 2) {
                out += rect(x, top + 1, 1, height - 2, parts[4] === 'u' ? '#000' : '#fff');
            }
            x += STEP;
        });
    });
    return out;
}

function drawLevels() {
    return levels.map(([x, colour, ranges]) => ranges.split(' ').map(range => {
        const [from, to = from] = range.split('-').map(Number);
        return rect(x, from, 7, to - from + 1, colour);
    }).join('')).join('');
}

// White arrow with a coloured core, repeated down the whole run
function drawEntries() {
    let out = '';
    entries.forEach(([x, from, to, colour]) => {
        const tall = to - from > 10;
        out += rect(x, from + 2, 7, Math.max(to - from - 4, 5), '#fff');
        out += rect(x + 2, from, 4, to - from + 1, '#fff');
        for (let y = from + 1; y + 7 <= to + 1; y += 8) {
            const ax = x - LEFT;
            const ay = y - TOP;
            out += `<path d="M${ax + 1} ${ay + 2}h2v-2h1v1h1v1h1v1h1v1h-1v1h-1v1h-1v1h-1v-2h-2z" fill="${colour}"/>`;
            if (tall) {
                for (let i = 0; i < 4; i++) {
                    out += rect(x + 5 + (i % 2), y + 2 * i, 1, 1, colour);
                    out += rect(x + 2 + 2 * (i % 2), y + 7, 1, 1, colour);
                }
            }
        }
    });
    return out;
}

document.getElementById('candles').innerHTML =
    drawSeparators() +
    '<path d="M0 536.5H3000" stroke="#778899"/>' +
    drawBars() + drawEntries() + drawLevels();

// Axis labels
const prices = ['1.11095', '1.10880', '1.10670', '1.10460', '1.10250', '1.10040', '1.09825', '1.09615', '1.09405',
    '1.09195', '1.08985', '1.08770', '1.08560', '1.08350', '1.08140', '1.07925', '1.07715', '1.07505'];
document.getElementById('prices').insertAdjacentHTML('afterbegin', prices.map(p => `<span>${p}</span>`).join(''));

const dates = ['31 Mar 2022', '1 Apr 12:00', '4 Apr 04:00', '4 Apr 20:00', '5 Apr 12:00', '6 Apr 04:00', '6 Apr 20:00',
    '7 Apr 12:00', '8 Apr 04:00', '8 Apr 20:00', '11 Apr 12:00', '12 Apr 04:00', '12 Apr 20:00', '13 Apr 12:00',
    '14 Apr 04:00', '14 Apr 20:00', '15 Apr 12:00', '18 Apr 04:00', '18 Apr 20:00'];
document.getElementById('dates').innerHTML = dates.map(d => `<span>${d}</span>`).join('');

// Market watch rows
const quotes = [
    ['USD...', '0.94...', 'fall'], ['GBP...', '1.29...', 'rise'], ['EUR...', '1.07...', 'rise'],
    ['USD...', '127....', 'fall'], ['USD...', '1.26...', 'rise'], ['AUD...', '0.73...', 'rise'],
    ['EUR...', '0.82...', 'rise'], ['EUR...', '1.46...', 'fall'], ['EUR...', '1.01...', 'fall'],
    ['EUR...', '137....', 'fall'], ['GBP...', '1.22...', 'rise']
];
document.getElementById('quoteRows').innerHTML = quotes.map(([name, price, move], i) =>
    `<tr class="${move} ${i < 6 ? 'major' : 'cross'}">
        <td><svg width="11" height="11"><use href="#${move === 'rise' ? 'up' : 'down'}"/></svg>${name}</td>
        <td>${price}</td><td>${price}</td>
    </tr>`).join('');
```
